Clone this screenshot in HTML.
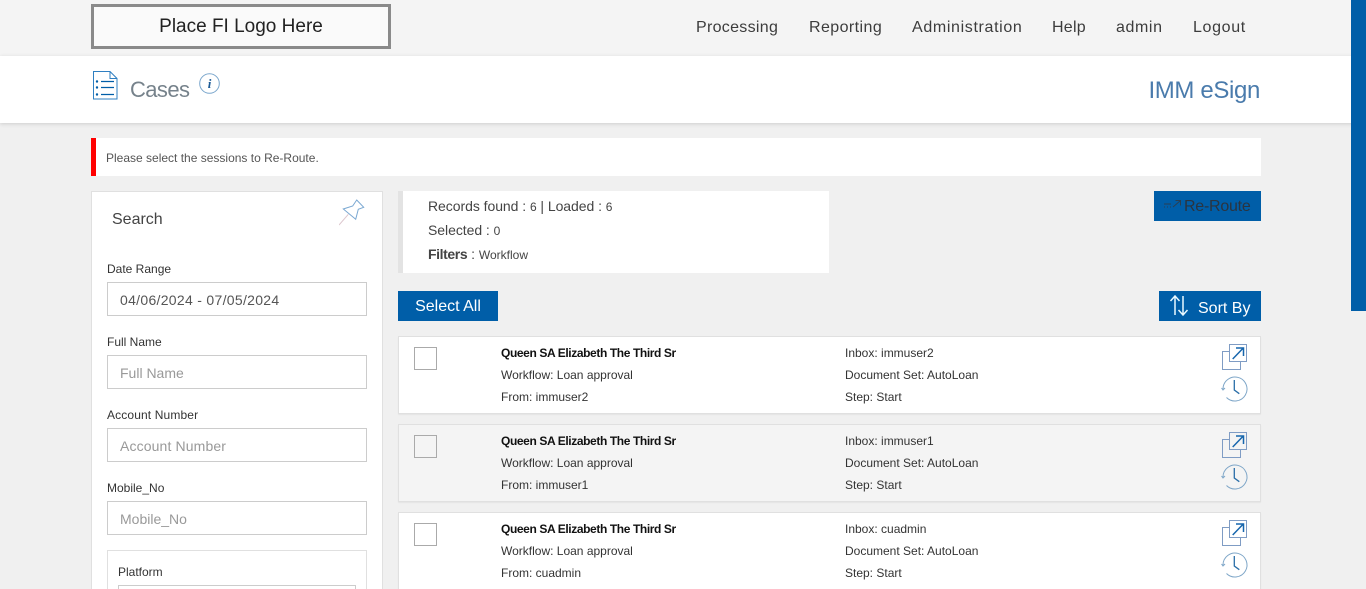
<!DOCTYPE html>
<html lang="en"><head><meta charset="utf-8"><title>Cases - IMM eSign</title>
<style>
html,body{margin:0;padding:0;width:1366px;height:589px;overflow:hidden;background:#f0f0f0;font-family:"Liberation Sans",sans-serif;color:#333}
#p{position:absolute;left:0;top:0;width:1366px;height:589px;overflow:hidden;background:#f0f0f0}
.a{position:absolute;white-space:nowrap}
.box{position:absolute;box-sizing:border-box}
.t{position:absolute;white-space:nowrap;line-height:16px}
.nav{top:19px;font-size:16px;line-height:18px;color:#3c3c3c}
.lbl{font-size:12px;color:#333;left:107px}
.inp{position:absolute;left:107px;width:260px;height:34px;box-sizing:border-box;border:1px solid #ccc;background:#fff;font-size:14px;line-height:32px;padding:1px 0 0 12px;color:#999}
.card{position:absolute;left:398px;width:863px;height:78px;box-sizing:border-box;border:1px solid #e0e0e0;box-shadow:0 1px 1px rgba(0,0,0,.05);background:#fff}
.card .cb{position:absolute;left:15px;top:10px;width:23px;height:23px;box-sizing:border-box;border:1px solid #aaa}
.card .t{font-size:12px;color:#333}
.card .n{letter-spacing:-.39px;color:#111;font-weight:bold}
.card svg{position:absolute;left:822px;top:6px}
</style></head><body><div id="p">
<div class="box" style="left:0;top:0;width:1366px;height:56px;background:#f4f4f4"></div>
<div class="box" style="left:91px;top:4px;width:300px;height:45px;border:3px solid #8a8a8a;background:#fafafa;text-align:center;font-size:19px;line-height:40px;color:#222">Place FI Logo Here</div>
<div class="a nav" style="left:696px;letter-spacing:.3px">Processing</div>
<div class="a nav" style="left:809px;letter-spacing:.42px">Reporting</div>
<div class="a nav" style="left:912px;letter-spacing:.65px">Administration</div>
<div class="a nav" style="left:1052px;letter-spacing:.25px">Help</div>
<div class="a nav" style="left:1116px;letter-spacing:.6px">admin</div>
<div class="a nav" style="left:1193px;letter-spacing:.65px">Logout</div>

<div class="box" style="left:0;top:56px;width:1366px;height:67px;background:#fff;box-shadow:0 1px 4px rgba(0,0,0,.15)"></div>
<svg class="a" style="left:93px;top:71px" width="25" height="30" viewBox="0 0 25 30" fill="none" stroke="#2f7fc1" stroke-width="1">
<path d="M.5 .5H17L24 7.500V28H.5Z"/><path d="M17 .5V7.500H24"/>
<path d="M8 10.500H21M8 16.500H21M8 23.500H21" stroke="#005ea8" stroke-width="1.300"/>
<circle cx="4" cy="10.500" r="1.200" fill="#005ea8" stroke="none"/><circle cx="4" cy="16.500" r="1.200" fill="#005ea8" stroke="none"/><circle cx="4" cy="23.500" r="1.200" fill="#005ea8" stroke="none"/></svg>
<div class="a" style="left:130px;top:76px;font-size:22px;line-height:28px;letter-spacing:-.6px;color:#76828b">Cases</div>
<svg class="a" style="left:199px;top:73px" width="21" height="21" viewBox="0 0 21 21"><circle cx="10.500" cy="10.500" r="9.800" fill="none" stroke="#7aa6cc"/><text x="10.500" y="15" text-anchor="middle" font-family="Liberation Serif" font-style="italic" font-weight="bold" font-size="13" fill="#1d5b96">i</text></svg>
<div class="a" style="right:106px;top:76px;font-size:24px;line-height:29px;letter-spacing:-.35px;color:#4a7bac">IMM eSign</div>

<div class="box" style="left:91px;top:138px;width:1170px;height:38px;background:#fff;border-left:5px solid #f00"></div>
<div class="t" style="left:106px;top:150px;font-size:12px;color:#555">Please select the sessions to Re-Route.</div>

<div class="box" style="left:91px;top:191px;width:292px;height:420px;background:#fff;border:1px solid #e0e0e0"></div>
<div class="t" style="left:112px;top:212px;font-size:16px;color:#444">Search</div>
<svg class="a" style="left:339px;top:198px" width="26" height="28" viewBox="0 0 26 28" fill="none" stroke="#7aa8d2" stroke-width="1"><path d="M17.700 2 24.700 9.300 19.300 11.300 16.700 21.300 4.300 11 13.700 8Z"/><path d="M9.300 16.300 0 27" stroke="#dcc6cd"/></svg>
<div class="t lbl" style="top:261px">Date Range</div>
<div class="inp" style="top:282px;color:#555;letter-spacing:.3px">04/06/2024 - 07/05/2024</div>
<div class="t lbl" style="top:334px">Full Name</div>
<div class="inp" style="top:355px">Full Name</div>
<div class="t lbl" style="top:407px;letter-spacing:.13px">Account Number</div>
<div class="inp" style="top:428px;letter-spacing:.13px">Account Number</div>
<div class="t lbl" style="top:480px">Mobile_No</div>
<div class="inp" style="top:501px">Mobile_No</div>
<div class="box" style="left:107px;top:550px;width:260px;height:60px;border:1px solid #e0e0e0"></div>
<div class="t" style="left:118px;top:564px;font-size:12px;color:#333">Platform</div>
<div class="box" style="left:118px;top:585px;width:238px;height:30px;border:1px solid #ccc;background:#fff"></div>

<div class="box" style="left:398px;top:191px;width:431px;height:82px;background:#fff;border-left:5px solid #e3e3e3"></div>
<div class="t" style="left:428px;top:198px;font-size:14px;color:#444;letter-spacing:-.05px">Records found : <span style="font-size:12px">6</span> | Loaded : <span style="font-size:12px">6</span></div>
<div class="t" style="left:428px;top:222px;font-size:14px;color:#444;letter-spacing:-.05px">Selected : <span style="font-size:12px">0</span></div>
<div class="t" style="left:428px;top:246px;font-size:14px;color:#444"><b style="letter-spacing:-.4px">Filters</b> : <span style="font-size:12px">Workflow</span></div>

<div class="box" style="left:1154px;top:191px;width:107px;height:30px;background:#005ea8"></div>
<svg class="a" style="left:1163px;top:199px" width="20" height="14" viewBox="0 0 20 14" fill="none" stroke="#2a3f52" stroke-width="1"><path d="M1 5H8M1 8H2M4 8H5M7 8H8M10 8 17 2M12.500 1.500H17.500V6.500"/></svg>
<div class="t" style="left:1184px;top:199px;font-size:16px;color:#2a3440;letter-spacing:-.25px">Re-Route</div>

<div class="box" style="left:398px;top:291px;width:100px;height:30px;background:#005ea8;color:#fff;font-size:16px;line-height:32px;text-align:center">Select All</div>
<div class="box" style="left:1159px;top:291px;width:102px;height:30px;background:#005ea8"></div>
<svg class="a" style="left:1169px;top:294px" width="20" height="24" viewBox="0 0 20 24" fill="none" stroke="#e8f8ff" stroke-width="1.500"><path d="M6 21V2M1.500 7 6 2 10.500 7M14 2V21M9.500 16 14 21 18.500 16"/></svg>
<div class="t" style="left:1198px;top:301px;font-size:16px;color:#fff">Sort By</div>

<div class="card" style="top:336px">
<div class="cb"></div>
<div class="t n" style="left:102px;top:8px">Queen SA Elizabeth The Third Sr</div>
<div class="t" style="left:102px;top:30px">Workflow: Loan approval</div>
<div class="t" style="left:102px;top:52px">From: immuser2</div>
<div class="t" style="left:446px;top:8px">Inbox: immuser2</div>
<div class="t" style="left:446px;top:30px">Document Set: AutoLoan</div>
<div class="t" style="left:446px;top:52px">Step: Start</div>
<svg width="28" height="62" viewBox="0 0 28 62" fill="none"><path d="M8 8.500H1.500V26.500H19.500V18" stroke="#7f9cc4"/><rect x="8.500" y="1.500" width="17" height="17" fill="#fff" stroke="#7f9cc4"/><path d="M11.700 16 22.300 5M15 5H22.500V13" stroke="#1766ad" stroke-width="1.500"/><path d="M2 46A12 12 0 1 1 5.500 54.500" stroke="#7ea6c8"/><path d="M.5 45 2 47 4 45" stroke="#7ea6c8"/><path d="M13.300 37V47L18.300 50.700" stroke="#2a6ea8" stroke-width="1.300"/></svg>
</div>

<div class="card" style="top:424px;background:#f4f4f4">
<div class="cb"></div>
<div class="t n" style="left:102px;top:8px">Queen SA Elizabeth The Third Sr</div>
<div class="t" style="left:102px;top:30px">Workflow: Loan approval</div>
<div class="t" style="left:102px;top:52px">From: immuser1</div>
<div class="t" style="left:446px;top:8px">Inbox: immuser1</div>
<div class="t" style="left:446px;top:30px">Document Set: AutoLoan</div>
<div class="t" style="left:446px;top:52px">Step: Start</div>
<svg width="28" height="62" viewBox="0 0 28 62" fill="none"><path d="M8 8.500H1.500V26.500H19.500V18" stroke="#7f9cc4"/><rect x="8.500" y="1.500" width="17" height="17" fill="#f4f4f4" stroke="#7f9cc4"/><path d="M11.700 16 22.300 5M15 5H22.500V13" stroke="#1766ad" stroke-width="1.500"/><path d="M2 46A12 12 0 1 1 5.500 54.500" stroke="#7ea6c8"/><path d="M.5 45 2 47 4 45" stroke="#7ea6c8"/><path d="M13.300 37V47L18.300 50.700" stroke="#2a6ea8" stroke-width="1.300"/></svg>
</div>

<div class="card" style="top:512px">
<div class="cb"></div>
<div class="t n" style="left:102px;top:8px">Queen SA Elizabeth The Third Sr</div>
<div class="t" style="left:102px;top:30px">Workflow: Loan approval</div>
<div class="t" style="left:102px;top:52px">From: cuadmin</div>
<div class="t" style="left:446px;top:8px">Inbox: cuadmin</div>
<div class="t" style="left:446px;top:30px">Document Set: AutoLoan</div>
<div class="t" style="left:446px;top:52px">Step: Start</div>
<svg width="28" height="62" viewBox="0 0 28 62" fill="none"><path d="M8 8.500H1.500V26.500H19.500V18" stroke="#7f9cc4"/><rect x="8.500" y="1.500" width="17" height="17" fill="#fff" stroke="#7f9cc4"/><path d="M11.700 16 22.300 5M15 5H22.500V13" stroke="#1766ad" stroke-width="1.500"/><path d="M2 46A12 12 0 1 1 5.500 54.500" stroke="#7ea6c8"/><path d="M.5 45 2 47 4 45" stroke="#7ea6c8"/><path d="M13.300 37V47L18.300 50.700" stroke="#2a6ea8" stroke-width="1.300"/></svg>
</div>

<div class="box" style="left:1351px;top:0;width:15px;height:311px;background:#005ea8"></div>
</div></body></html>
